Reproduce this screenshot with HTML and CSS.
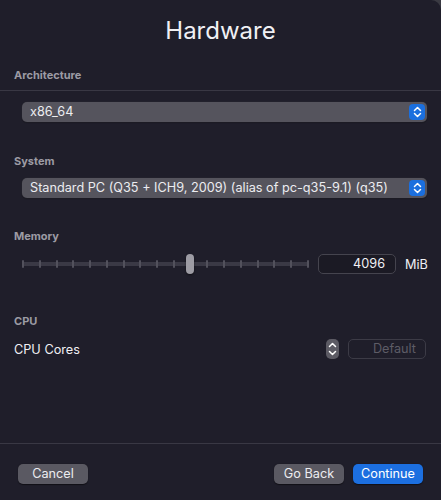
FILE: index.html
```html
<!DOCTYPE html>
<html>
<head>
<meta charset="utf-8">
<link rel="stylesheet" href="styles.css">
</head>
<body>
<div class="window">
  <h1 class="title">Hardware</h1>
  <div class="label label-arch">Architecture</div>
  <div class="divider"></div>
  <div class="section section-arch">
    <div class="select">
      <span class="select-text">x86_64</span>
      <span class="select-btn"><svg width="9" height="12" viewBox="0 0 9 12"><path d="M1.5 4.5 L4.5 1.5 L7.5 4.5 M1.5 7.5 L4.5 10.5 L7.5 7.5" fill="none" stroke="#fff" stroke-width="1.5" stroke-linecap="round" stroke-linejoin="round"/></svg></span>
    </div>
  </div>
  <div class="label label-sys">System</div>
  <div class="section section-sys">
    <div class="select">
      <span class="select-text">Standard PC (Q35 + ICH9, 2009) (alias of pc-q35-9.1) (q35)</span>
      <span class="select-btn"><svg width="9" height="12" viewBox="0 0 9 12"><path d="M1.5 4.5 L4.5 1.5 L7.5 4.5 M1.5 7.5 L4.5 10.5 L7.5 7.5" fill="none" stroke="#fff" stroke-width="1.5" stroke-linecap="round" stroke-linejoin="round"/></svg></span>
    </div>
  </div>
  <div class="label label-mem">Memory</div>
  <div class="mem-row">
    <div class="slider">
      <div class="track"></div>
      <div class="ticks">
        <span></span><span></span><span></span><span></span><span></span><span></span>
        <span></span><span></span><span></span><span></span><span></span><span></span>
        <span></span><span></span><span></span><span></span><span></span><span></span>
      </div>
      <div class="knob"></div>
    </div>
    <div class="mem-input">4096</div>
    <div class="mem-unit">MiB</div>
  </div>
  <div class="label label-cpu">CPU</div>
  <div class="cpu-row">
    <div class="cpu-label">CPU Cores</div>
    <div class="stepper"><svg width="9" height="16" viewBox="0 0 9 16"><path d="M1.5 5.5 L4.5 2.5 L7.5 5.5 M1.5 10.5 L4.5 13.5 L7.5 10.5" fill="none" stroke="#fff" stroke-width="1.5" stroke-linecap="round" stroke-linejoin="round"/></svg></div>
    <div class="default-field">Default</div>
  </div>
  <div class="spacer"></div>
  <div class="divider divider-bottom"></div>
  <div class="footer">
    <button class="btn">Cancel</button>
    <div class="footer-right">
      <button class="btn">Go Back</button>
      <button class="btn btn-primary">Continue</button>
    </div>
  </div>
</div>
</body>
</html>
```
FILE: styles.css
```css
html, body {
  margin: 0;
  padding: 0;
  background: #3a3a42;
}
body {
  font-family: Inter, "Liberation Sans", sans-serif;
  color: #e9e9ee;
  width: 441px;
  height: 500px;
  overflow: hidden;
}
.window {
  width: 441px;
  height: 500px;
  background: #1f1e2a;
  border-top-right-radius: 10px;
  display: flex;
  flex-direction: column;
}
.title {
  margin: 0;
  padding-top: 16px;
  height: 30px;
  font-size: 24px;
  font-weight: 400;
  text-align: center;
  color: #f0f0f4;
  line-height: 30px;
}
.label {
  font-size: 11px;
  font-weight: 700;
  color: #9c9ba4;
  padding-left: 14px;
  line-height: 14px;
}
.label-arch { margin-top: 22px; }
.label-sys { margin-top: 32px; }
.label-mem { margin-top: 31px; }
.label-cpu { margin-top: 40px; }
.divider {
  height: 1px;
  background: #393844;
  margin-top: 8px;
}
.divider-bottom { margin-top: 0; }
.section {
  padding: 0 14px 0 22px;
}
.section-arch { margin-top: 11px; }
.section-sys { margin-top: 10px; }
.select {
  height: 20px;
  background: #55545d;
  border-radius: 5px;
  box-shadow: 0 0 0 0.5px #26252e, 0 1px 1px rgba(0,0,0,0.4);
  display: flex;
  align-items: center;
  justify-content: space-between;
  padding-left: 8px;
  padding-right: 2px;
}
.select-text {
  font-size: 12.7px;
  color: #ececf0;
  line-height: 16px;
}
.select-btn {
  width: 16px;
  height: 16px;
  background: #1b6fde;
  border-radius: 4px;
  display: flex;
  align-items: center;
  justify-content: center;
}
.mem-row {
  margin-top: 11px;
  display: flex;
  align-items: center;
  height: 20px;
  padding-left: 22px;
}
.slider {
  position: relative;
  width: 287px;
  height: 20px;
}
.track {
  position: absolute;
  left: 0;
  right: 0;
  top: 8px;
  height: 4px;
  background: #3a3945;
  border-radius: 2px;
}
.ticks {
  position: absolute;
  left: 0;
  right: 0;
  top: 6px;
  height: 8px;
  display: flex;
  justify-content: space-between;
}
.ticks span {
  width: 2px;
  height: 8px;
  background: #52515c;
  border-radius: 1px;
}
.knob {
  position: absolute;
  left: 164px;
  top: 0;
  width: 8px;
  height: 20px;
  background: #9d9ca4;
  border-radius: 4px;
  box-shadow: 0 1px 2px rgba(0,0,0,0.5);
}
.mem-input {
  margin-left: 9px;
  width: 66px;
  height: 18px;
  border: 1px solid #45444e;
  border-radius: 5px;
  background: #1b1a24;
  font-size: 12.7px;
  line-height: 18px;
  text-align: right;
  padding-right: 10px;
  color: #f0f0f4;
}
.mem-unit {
  margin-left: 9px;
  font-size: 12.7px;
  color: #f0f0f4;
}
.cpu-row {
  margin-top: 11px;
  display: flex;
  align-items: center;
  height: 20px;
  padding-left: 14px;
}
.cpu-label {
  font-size: 12.7px;
  color: #f0f0f4;
  flex: 1;
}
.stepper {
  width: 13px;
  height: 20px;
  background: #5c5b64;
  border-radius: 5px;
  display: flex;
  align-items: center;
  justify-content: center;
}
.default-field {
  margin-left: 9px;
  margin-right: 15px;
  width: 67px;
  height: 18px;
  border: 1px solid #3c3b46;
  border-radius: 5px;
  font-size: 12.7px;
  line-height: 18px;
  text-align: right;
  padding-right: 9px;
  color: #5d5c66;
}
.spacer { flex: 1; }
.footer {
  height: 52px;
  padding: 4px 18px 0 18px;
  display: flex;
  align-items: center;
  justify-content: space-between;
}
.footer-right {
  display: flex;
  gap: 9px;
}
.btn {
  font-family: inherit;
  font-size: 12.7px;
  color: #ececf0;
  background: #5a5962;
  border: none;
  border-radius: 5px;
  width: 70px;
  height: 20px;
  padding: 0;
  line-height: 20px;
  box-shadow: 0 0.5px 1px rgba(0,0,0,0.5);
}
.btn-primary {
  background: #1c6fe0;
  color: #fff;
}
```
